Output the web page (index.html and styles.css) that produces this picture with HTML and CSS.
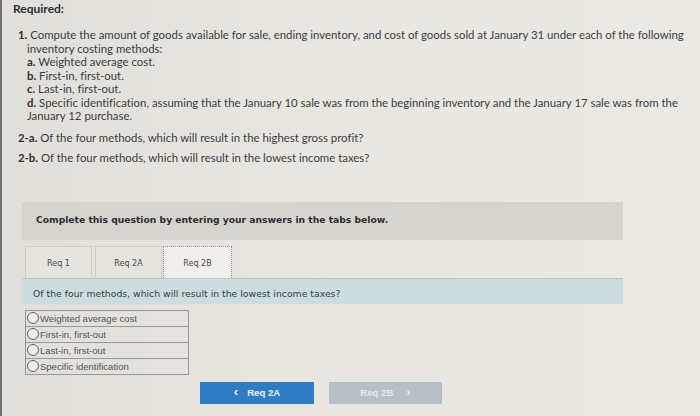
FILE: index.html
```html
<!DOCTYPE html>
<html>
<head>
<meta charset="utf-8">
<link rel="stylesheet" href="styles.css">
</head>
<body>
<div class="page">
  <div class="req-title">Required:</div>
  <div class="q1">
    <p class="lead"><b>1.</b> Compute the amount of goods available for sale, ending inventory, and cost of goods sold at January 31 under each of the following</p>
    <p class="sub">inventory costing methods:</p>
    <p class="sub"><b>a.</b> Weighted average cost.</p>
    <p class="sub"><b>b.</b> First-in, first-out.</p>
    <p class="sub"><b>c.</b> Last-in, first-out.</p>
    <p class="sub"><b>d.</b> Specific identification, assuming that the January 10 sale was from the beginning inventory and the January 17 sale was from the<br>January 12 purchase.</p>
  </div>
  <p class="q2 first"><b>2-a.</b> Of the four methods, which will result in the highest gross profit?</p>
  <p class="q2"><b>2-b.</b> Of the four methods, which will result in the lowest income taxes?</p>

  <section class="panel">
    <div class="instr">Complete this question by entering your answers in the tabs below.</div>
    <div class="tabs">
      <div class="tab">Req 1</div>
      <div class="tab">Req 2A</div>
      <div class="tab active">Req 2B</div>
    </div>
    <div class="prompt">Of the four methods, which will result in the lowest income taxes?</div>
    <div class="opts">
      <label class="opt"><span class="radio"></span>Weighted average cost</label>
      <label class="opt"><span class="radio"></span>First-in, first-out</label>
      <label class="opt"><span class="radio"></span>Last-in, first-out</label>
      <label class="opt"><span class="radio"></span>Specific identification</label>
    </div>
    <div class="nav">
      <div class="btn prev"><span class="chev">&lsaquo;</span>Req 2A</div>
      <div class="btn next">Req 2B<span class="chev">&rsaquo;</span></div>
    </div>
  </section>
</div>
</body>
</html>
```

FILE: styles.css
```css
html, body {
  margin: 0;
  padding: 0;
}
body {
  width: 700px;
  height: 416px;
  overflow: hidden;
  background: linear-gradient(90deg, #e1dfd9 0%, #e8e6e0 45%, #ebe9e4 100%);
}
.page {
  box-sizing: border-box;
  height: 416px;
  border-left: 2px solid #6f6f6c;
  padding: 2px 0 0 11px;
  font-family: Lato, "Open Sans", sans-serif;
  font-variant-ligatures: none;
  color: #3d3d3b;
}
.req-title {
  font-size: 12px;
  line-height: 14px;
  font-weight: 700;
  color: #2f2f2e;
}
.q1 {
  margin-top: 12px;
  padding-left: 5px;
}
.q1 p, .q2 {
  margin: 0;
  font-size: 11.4px;
  line-height: 13.5px;
  white-space: nowrap;
}
.q1 b, .q2 b {
  font-weight: 700;
  color: #2f2f2e;
}
.sub {
  padding-left: 9px;
}
.q2 {
  padding-left: 5px;
  margin-top: 6.5px !important;
}
.q2.first {
  margin-top: 8.5px !important;
}
.panel {
  margin-top: 37px;
  margin-left: 9px;
  width: 601px;
}
.instr {
  box-sizing: border-box;
  height: 38px;
  background: #d6d4ce;
  padding: 0 14px 3px;
  display: flex;
  align-items: center;
  font-family: "DejaVu Sans", Verdana, sans-serif;
  font-weight: 700;
  font-size: 9.2px;
  color: #2e2e2d;
}
.tabs {
  margin-top: 6px;
  height: 32px;
  display: flex;
  padding-left: 3px;
}
.tab {
  box-sizing: border-box;
  width: 67px;
  height: 32px;
  margin-right: 1px;
  border: 1px solid #cfcdc7;
  border-bottom: none;
  background: #e6e4de;
  display: flex;
  align-items: center;
  justify-content: center;
  padding-top: 2px;
  font-family: "DejaVu Sans", Verdana, sans-serif;
  font-size: 8px;
  color: #4a4a48;
}
.tab:nth-child(2) {
  margin-left: 2px;
}
.tab.active {
  width: 69px;
  background: #f0efeb;
  border: 1px dotted #8d8c88;
  border-bottom: none;
}
.prompt {
  box-sizing: border-box;
  height: 26px;
  background: #cddcdf;
  border-top: 1px solid #b9c6c8;
  padding: 5px 0 0 11px;
  display: flex;
  align-items: center;
  font-family: "DejaVu Sans", Verdana, sans-serif;
  font-size: 9.3px;
  color: #3a3c3c;
}
.opts {
  margin: 6px 0 0 3px;
  width: 164px;
  border: 1px solid #9a9995;
  box-sizing: border-box;
}
.opt {
  display: flex;
  align-items: center;
  box-sizing: border-box;
  height: 16px;
  border-top: 1px solid #9a9995;
  font-family: "Liberation Sans", Arial, sans-serif;
  font-size: 9.5px;
  color: #555553;
}
.opt:first-child {
  border-top: none;
  height: 15px;
}
.radio {
  box-sizing: border-box;
  width: 12px;
  height: 12px;
  border: 1px solid #636361;
  border-radius: 50%;
  background: #eeede9;
  margin: 0 1px 0 1px;
  flex: none;
}
.nav {
  margin: 7px 0 0 178px;
  display: flex;
  gap: 15px;
}
.btn {
  box-sizing: border-box;
  width: 114px;
  height: 22px;
  display: flex;
  align-items: center;
  justify-content: center;
  font-family: "Liberation Sans", Arial, sans-serif;
  font-weight: 700;
  font-size: 9.6px;
}
.prev {
  background: #2d7dc6;
  color: #f2f6fb;
}
.prev .chev {
  font-size: 13px;
  margin-right: 9px;
  margin-top: -2px;
}
.next {
  background: #b8c0c6;
  color: #e4eaee;
  width: 113px;
}
.next .chev {
  font-size: 13px;
  margin-left: 13px;
  margin-top: -2px;
}
```
